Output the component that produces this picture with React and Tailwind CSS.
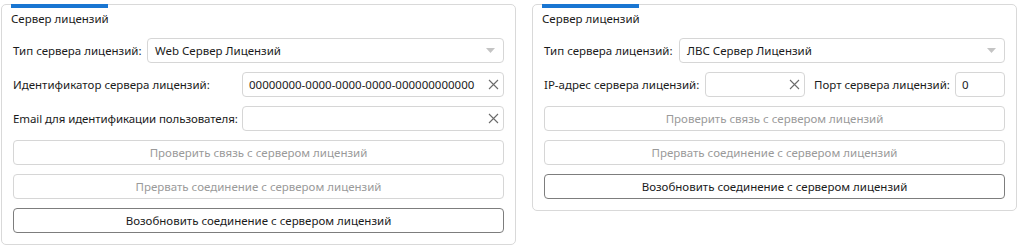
import React from "react";

const font = { fontFamily: '"Noto Sans", "Open Sans", sans-serif' };

function XIcon() {
  return (
    <svg width="11" height="11" viewBox="0 0 11 11" className="shrink-0">
      <path d="M1 1 L10 10 M10 1 L1 10" stroke="#6b6b6b" strokeWidth="1.1" fill="none" />
    </svg>
  );
}

function Arrow() {
  return (
    <svg width="9" height="5" viewBox="0 0 9 5" className="shrink-0">
      <path d="M0 0 L9 0 L4.5 5 Z" fill="#c4c4c4" />
    </svg>
  );
}

function Select({ value }) {
  return (
    <div className="flex-1 h-[25px] border border-[#d6d6d6] rounded-[4px] bg-white flex items-center pl-[7px] pr-[8px]">
      <span className="flex-1 text-[11.5px] text-[#1b1b1b] leading-[16px]">{value}</span>
      <Arrow />
    </div>
  );
}

function Input({ value, clear = true, className = "flex-1" }) {
  return (
    <div className={`${className} h-[25px] border border-[#d6d6d6] rounded-[4px] bg-white flex items-center pl-[6px] pr-[4px]`}>
      <span className="flex-1 text-[11.5px] text-[#1b1b1b] leading-[16px] whitespace-nowrap">{value}</span>
      {clear && <XIcon />}
    </div>
  );
}

function Button({ children, enabled }) {
  return (
    <div
      className={
        enabled
          ? "h-[25px] border border-[#7d7d7d] rounded-[4px] bg-white flex items-center justify-center text-[11.5px] text-[#1b1b1b]"
          : "h-[25px] border border-[#d6d6d6] rounded-[4px] bg-white flex items-center justify-center text-[11.5px] text-[#9a9a9a]"
      }
    >
      {children}
    </div>
  );
}

function Panel({ children, className }) {
  return (
    <div className={`relative border border-[#d9d9d9] rounded-[5px] bg-white ${className}`}>
      <div className="absolute top-[-1px] left-[9px] w-[97px] h-[4px] bg-[#1976d2]" />
      <div className="pt-[6px] pl-[9px] h-[21px] text-[11.5px] leading-[16px] text-[#1b1b1b]">Сервер лицензий</div>
      <div className="mt-[12px] px-[11px] pb-[11px] flex flex-col gap-[9px]">{children}</div>
    </div>
  );
}

const Label = ({ children, w }) => (
  <div className={`${w} shrink-0 text-[11.5px] text-[#1b1b1b] whitespace-nowrap`}>{children}</div>
);

export default function App() {
  return (
    <div className="w-[1018px] h-[252px] bg-white flex items-start pt-[4px] pl-[1px]" style={font}>
      <Panel className="w-[515px]">
        <div className="flex items-center">
          <Label w="w-[134px]">Тип сервера лицензий:</Label>
          <Select value="Web Сервер Лицензий" />
        </div>
        <div className="flex items-center">
          <Label w="w-[229px]">Идентификатор сервера лицензий:</Label>
          <Input value="00000000-0000-0000-0000-000000000000" />
        </div>
        <div className="flex items-center">
          <Label w="w-[229px] tracking-[-0.1px]">Email для идентификации пользователя:</Label>
          <Input value="" />
        </div>
        <Button>Проверить связь с сервером лицензий</Button>
        <Button>Прервать соединение с сервером лицензий</Button>
        <Button enabled>Возобновить соединение с сервером лицензий</Button>
      </Panel>
      <Panel className="w-[485px] ml-[16px]">
        <div className="flex items-center">
          <Label w="w-[135px]">Тип сервера лицензий:</Label>
          <Select value="ЛВС Сервер Лицензий" />
        </div>
        <div className="flex items-center">
          <Label w="w-[161px]">IP-адрес сервера лицензий:</Label>
          <Input value="" className="w-[100px]" />
          <Label w="w-[150px] pl-[9px]">Порт сервера лицензий:</Label>
          <Input value="0" clear={false} className="flex-1" />
        </div>
        <Button>Проверить связь с сервером лицензий</Button>
        <Button>Прервать соединение с сервером лицензий</Button>
        <Button enabled>Возобновить соединение с сервером лицензий</Button>
      </Panel>
    </div>
  );
}
